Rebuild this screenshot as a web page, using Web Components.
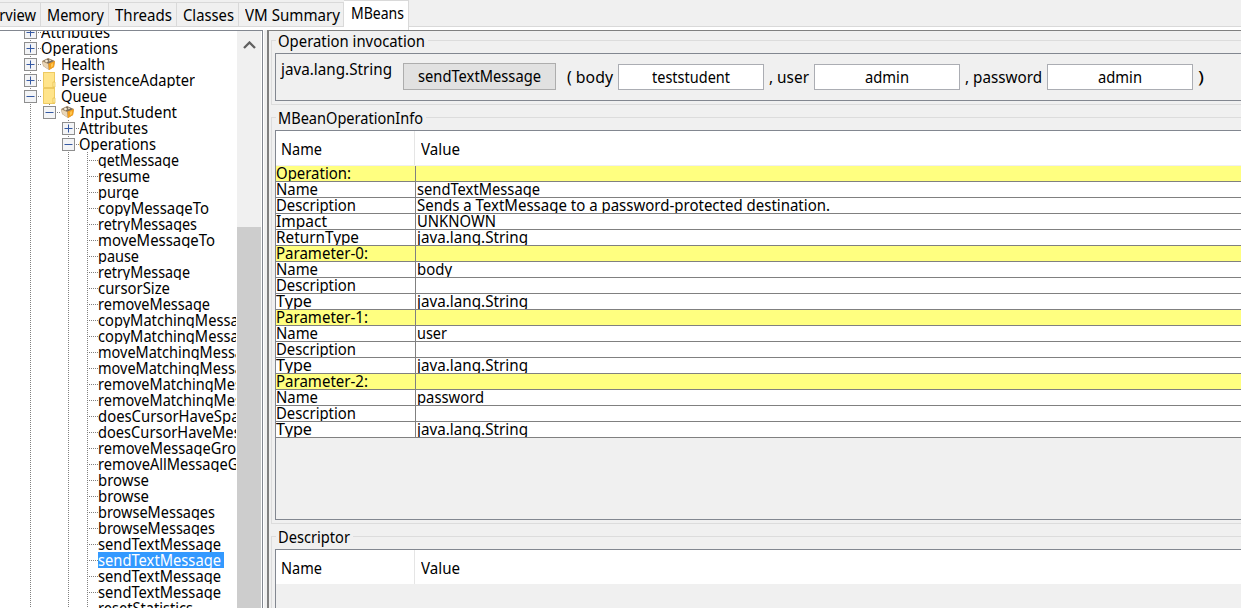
<!DOCTYPE html>
<html lang="en"><head><meta charset="utf-8"><title>Console</title>
<style>html,body{margin:0;width:1241px;height:608px;overflow:hidden;background:#fff}</style></head>
<body><mbean-console></mbean-console>
<script>
const define=(name,css,html,after)=>customElements.define(name,class extends HTMLElement{
  constructor(){super();this.attachShadow({mode:'open'})}
  connectedCallback(){
    this.shadowRoot.innerHTML='<style>'+css+'</style>'+(typeof html==='function'?html(this):html);
    if(after)after(this,this.shadowRoot);
  }
});

/* A label condensed horizontally to the width given in "w". */
define('ui-text',':host{display:block;flex:none;white-space:pre;font:16px/20px "Noto Sans","Open Sans",sans-serif;height:20px}span{display:inline-block;transform-origin:0 50%}',
 '<span><slot></slot></span>',(h,r)=>{
  const s=r.querySelector('span'),w=+h.getAttribute('w');
  h.style.width='max-content';
  const exact=s.getBoundingClientRect().width;
  h.style.width=w+'px';s.style.transform='scaleX('+(w/exact)+')';
 });

define('tab-item',`:host{box-sizing:border-box;display:flex;flex:none;height:25px;margin-top:2px;border:solid #d9d9d9;border-width:1px 1px 1px 0;background:#f0f0f0;padding:2px 0 0 6px}
:host([selected]){margin-top:0;height:30px;background:#fff;border-width:1px 1px 0 0;padding:2px 0 0 7px}`,'<slot></slot>');

define('tab-bar',`:host{display:flex;height:30px;background:linear-gradient(#f0f0f0 26px,#d9d9d9 26px,#d9d9d9 27px,#fff 27px)}`,'<slot></slot>');

define('tree-row',`:host{display:flex;height:16px;overflow:hidden;align-items:flex-start;color:#000}
.pad{width:30px;flex:none}.pad.root{width:24px}
.v{width:19px;height:16px;flex:none;background:repeating-linear-gradient(#808080 0 1px,transparent 1px 2px) 0 0/1px 100% no-repeat}
.last{width:13px}.off{background:none}svg{display:block;flex:none}
.t{display:flex;align-items:flex-start;height:16px;overflow:hidden;flex:none}.t ui-text{margin-top:-2px}.sel{background:#3399ff;color:#fff;padding-right:3px}
.leaf{width:11px;height:16px;flex:none;background:repeating-linear-gradient(#808080 0 1px,transparent 1px 2px) 0 0/1px 100% no-repeat,repeating-linear-gradient(90deg,#808080 0 1px,transparent 1px 2px) 0 8px/11px 1px no-repeat}`,
h=>{
 const d=+h.getAttribute('depth'),k=h.getAttribute('kind'),ic=h.getAttribute('icon');
 let o='<div class="pad'+(d===0?' root':'')+'"></div>';
 for(let i=0;i<d;i++)o+='<div class="v'+(i===d-1&&k!=='leaf'?' last':'')+(i===1?' off':'')+'"></div>';
 /* the third guide belongs to the Operations level and stays visible beside its leaves */
 if(k==='leaf')o+='<div class="leaf"></div>';
 else o+='<svg width="17" height="16" viewBox="0 0 17 16"><path d="M6.5 0v16M14 8.5h3" stroke="#808080" stroke-dasharray="1 1"/><rect x=".5" y="2.5" width="12" height="12" fill="#f3f4f6" stroke="#8e8e8e"/><path d="M2.500 8.500h8'+(k==='plus'?'M6.500 4.500v8':'')+'" stroke="#3559a3" fill="none"/></svg>';
 if(ic==='bean')o+='<svg width="20" height="16" viewBox="0 0 20 16"><path d="M1 5 7 2l7 3-1 6-5 3-6-4z" fill="#b3936b"/><path d="m7.500 7.500 6.500-2.500-1 6-5 3z" fill="#f4a01c"/><path d="m1.500 5.500 5.500 2.500.5 5.500L2.500 10z" fill="#e8d6b8"/><path d="m2 5 5.500-2.500L13 5 7.500 7.500z" fill="#7b6d5c"/><path d="m3.500 5 2-1.500L7.500 5l-2 1.500zM8 3.500l2.500.5L8.500 5.500z" fill="#f5e9d1"/><path d="m10 8 2-1v3l-2 1.500z" fill="#ffc64f"/></svg>';
 if(ic==='folder')o+='<svg width="20" height="16" viewBox="0 0 20 16"><path d="M2 0h12v16H2z" fill="#ffe48a"/><path d="M2.500 0v15.500h11V0M2 .5h11" fill="none" stroke="#edca62"/><path d="M12 10h2v5h-2z" fill="#fff0a8" stroke="#e5bc49" stroke-width=".7"/></svg>';
 return o+'<div class="t '+(h.hasAttribute('selected')?'sel':'')+'"><ui-text w="'+h.getAttribute('w')+'"><slot></slot></ui-text></div>';
});

define('mbean-tree',`:host{box-sizing:border-box;display:flex;width:263px;height:578px;flex:none;border-top:1px solid #828790;border-right:1px solid #828790;background:#fff;overflow:hidden}
.list{width:236px;margin-right:1px;height:577px;overflow:hidden;flex:none}.rows{margin-top:-7px}
.bar{width:24px;flex:none;background:#f0f0f0;display:flex;flex-direction:column}.bar svg{display:block;margin:10px 0 0 6px;flex:none}.thumb{margin-top:178px;flex:1;background:#cdcdcd}`,
 '<div class="list"><div class="rows"><slot></slot></div></div><div class="bar"><svg width="13" height="8"><path d="m1 7 5.500-5.500L12 7" fill="none" stroke="#606060" stroke-width="2.3"/></svg><div class="thumb"></div></div>');

/* Titled etched frame; the title interrupts the top line. */
define('titled-frame',`:host{box-sizing:border-box;display:block;border-bottom:1px solid #dcdcdc;height:var(--h);margin-left:2px;padding-left:4px;background:linear-gradient(#dcdcdc,#dcdcdc) 0 9px/1px 100% no-repeat}
.cap{display:flex;height:20px;margin-left:-4px;align-items:flex-start}.a,.b{height:1px;background:#dcdcdc;margin-top:9px}.a{width:5px;margin-right:2px}.b{flex:1;margin-left:3px}`,
 h=>'<div class="cap"><i class="a"></i><ui-text w="'+h.getAttribute('w')+'">'+h.getAttribute('label')+'</ui-text><i class="b"></i></div><slot></slot>');

define('field-box',`:host{box-sizing:border-box;display:flex;flex:none;width:146px;height:26px;border:1px solid #abadb3;background:#fff;justify-content:center;padding:2px 1px 0 0}`,'<slot></slot>');
define('push-button',`:host{box-sizing:border-box;display:flex;flex:none;width:153px;height:27px;border:1px solid #adadad;background:#e1e1e1;justify-content:center;padding-top:2px}`,'<slot></slot>');

define('table-head',`:host{display:flex;height:35px;background:linear-gradient(#fff 34px,#f0f0f0 34px)}div{box-sizing:border-box;height:34px;padding:8px 0 0 5px}.n{width:139px;border-right:1px solid #e5e5e5}.v{padding-left:6px}`,
 '<div class="n"><ui-text w="41">Name</ui-text></div><div class="v"><ui-text w="39">Value</ui-text></div>');
define('table-row',`:host{display:flex;height:16px;background:#fff;overflow:hidden}:host([band]){background:#ffff80}
div{box-sizing:border-box;display:flex;align-items:flex-start;height:16px;overflow:hidden;border-bottom:1px solid #808080}.n{width:140px;border-right:1px solid #808080;flex:none}.v{flex:1;padding-left:1px}ui-text{margin-top:-3px}`,
 h=>'<div class="n"><ui-text w="'+h.getAttribute('nw')+'">'+h.getAttribute('name')+'</ui-text></div><div class="v">'+(h.hasAttribute('value')?'<ui-text w="'+h.getAttribute('vw')+'">'+h.getAttribute('value')+'</ui-text>':'')+'</div>');
define('data-grid',`:host{box-sizing:border-box;display:block;border:1px solid #828790;border-right:0;height:var(--gh);background:#f0f0f0;overflow:hidden;margin-top:2px}`,'<slot></slot>');

const T=[
['Attributes',69,0,'plus'],['Operations',77,0,'plus'],['Health',44,0,'plus','bean'],['PersistenceAdapter',134,0,'plus','folder'],['Queue',46,0,'minus','folder'],
['Input.Student',97,1,'minus','bean'],['Attributes',69,2,'plus'],['Operations',77,2,'minus'],
...[['getMessage',81],['resume',52],['purge',41],['copyMessageTo',111],['retryMessages',99],['moveMessageTo',117],['pause',41],['retryMessage',92],['cursorSize',72],['removeMessage',112],['copyMatchingMessages',165],['copyMatchingMessages',165],['moveMatchingMessages',169],['moveMatchingMessages',169],['removeMatchingMessages',183],['removeMatchingMessages',183],['doesCursorHaveSpace',157],['doesCursorHaveMessagesBuffered',242],['removeMessageGroup',156],['removeAllMessageGroups',180],['browse',51],['browse',51],['browseMessages',117],['browseMessages',117],['sendTextMessage',123],['sendTextMessage',123],['sendTextMessage',123],['sendTextMessage',123],['resetStatistics',95]].map(a=>[a[0],a[1],3,'leaf'])];
const tree=T.map((a,i)=>`<tree-row w="${a[1]}" depth="${a[2]}" kind="${a[3]}" icon="${a[4]||''}"${i===33?' selected':''}>${a[0]}</tree-row>`).join('');
const R=[['Operation:',75,null,0,1],['Name',42,'sendTextMessage',123],['Description',80,'Sends a TextMessage to a password-protected destination.',413],['Impact',51,'UNKNOWN',79],['ReturnType',83,'java.lang.String',111]];
['body:35','user:30','password:67'].forEach((p,i)=>{const[n,w]=p.split(':');R.push(['Parameter-'+i+':',92,null,0,1],['Name',42,n,w],['Description',80],['Type',36,'java.lang.String',111])});
const rows=R.map(a=>`<table-row name="${a[0]}" nw="${a[1]}"${a[2]?` value="${a[2]}" vw="${a[3]}"`:''}${a[4]?' band':''}></table-row>`).join('');

define('mbean-console',`:host{display:block;width:1241px;height:608px;overflow:hidden;color:#000;background:#f0f0f0}
.main{display:flex;height:578px}.gap{width:4px;flex:none;background:linear-gradient(90deg,#fff 0 1px,#f0f0f0 1px 4px)}
.right{box-sizing:border-box;flex:1;min-width:0;border-top:1px solid #808080;border-left:2px solid #808080;height:578px;overflow:hidden;background:#f0f0f0}
.op{box-sizing:border-box;display:flex;border:1px solid #828790;border-right:0;height:48px;margin-top:2px}
.op>*{margin-top:13px}.first{margin:5px 0 0 5px}.op push-button{margin:9px 11px 0 11px}.op field-box{margin:10px 5px 0}
.f1{--h:74px}.f2{--h:416px;margin-top:3px}.f3{--h:100px;margin-top:3px}
.f2 data-grid{--gh:390px}.f3 data-grid{--gh:100px}`,
`<tab-bar><tab-item style="width:41px;padding-left:0;justify-content:flex-end;padding-right:4px"><ui-text w="64">Overview</ui-text></tab-item>
<tab-item style="width:68px"><ui-text w="57">Memory</ui-text></tab-item><tab-item style="width:68px"><ui-text w="57">Threads</ui-text></tab-item><tab-item style="width:62px"><ui-text w="51">Classes</ui-text></tab-item><tab-item style="width:105px"><ui-text w="95">VM Summary</ui-text></tab-item><tab-item selected style="width:65px"><ui-text w="53">MBeans</ui-text></tab-item></tab-bar>
<div class="main"><mbean-tree>${tree}</mbean-tree><div class="gap"></div><div class="right">
<titled-frame class="f1" label="Operation invocation" w="147"><div class="op"><ui-text class="first" w="111">java.lang.String</ui-text><push-button><ui-text w="123">sendTextMessage</ui-text></push-button><ui-text w="46">( body</ui-text><field-box><ui-text w="78">teststudent</ui-text></field-box><ui-text w="40">, user</ui-text><field-box><ui-text w="44">admin</ui-text></field-box><ui-text w="77">, password</ui-text><field-box><ui-text w="44">admin</ui-text></field-box><ui-text w="6">)</ui-text></div></titled-frame>
<titled-frame class="f2" label="MBeanOperationInfo" w="145"><data-grid><table-head></table-head>${rows}</data-grid></titled-frame>
<titled-frame class="f3" label="Descriptor" w="72"><data-grid><table-head></table-head></data-grid></titled-frame>
</div></div>`);
</script></body></html>
